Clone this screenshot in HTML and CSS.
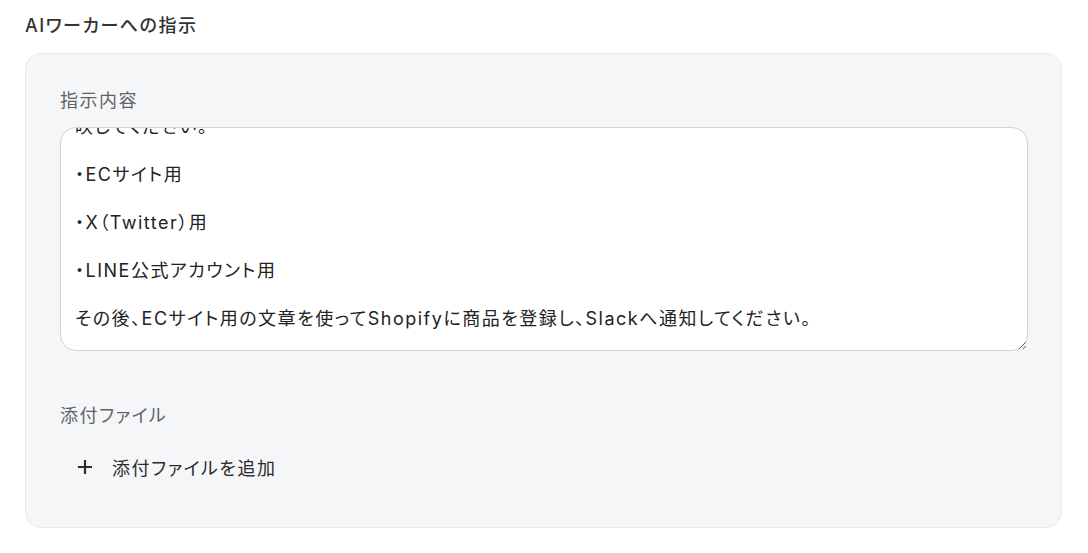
FILE: index.html
```html
<!DOCTYPE html>
<html lang="ja">
<head>
<meta charset="utf-8">
<title>AIワーカーへの指示</title>
<link rel="stylesheet" href="styles.css">
</head>
<body>
<div class="page">
  <h2 class="title">AIワーカーへの指示</h2>
  <section class="card">
    <div class="label">指示内容</div>
    <div class="editor">
      <div class="editor-text">商品情報をもとに、以下の3種類の紹介文を作成し、それぞれの媒体の特徴を反
映してください。

・ECサイト用

・X（Twitter）用

・LINE公式アカウント用

その後、ECサイト用の文章を使ってShopifyに商品を登録し、Slackへ通知してください。</div>
    </div>
    <div class="label label-files">添付ファイル</div>
    <button class="add-file" type="button">
      <svg class="plus" width="18" height="18" viewBox="0 0 18 18" aria-hidden="true">
        <path d="M9 2v14M2 9h14" stroke="#2b2b2b" stroke-width="2.2" fill="none"/>
      </svg>
      <span>添付ファイルを追加</span>
    </button>
  </section>
</div>
</body>
</html>
```

FILE: styles.css
```css
* { box-sizing: border-box; }

html, body {
  margin: 0;
  padding: 0;
  background: #ffffff;
}

body {
  font-family: Inter, "Noto Sans CJK JP", sans-serif;
  font-feature-settings: "palt";
  letter-spacing: 1.5px;
  color: #222;
}

.page {
  padding: 12px 26px 0 25px;
}

.title {
  margin: 0 0 13px;
  font-size: 18px;
  line-height: 28px;
  font-weight: 500;
  color: #333;
}

.card {
  background: #f5f6f8;
  border: 1px solid #e6e8eb;
  border-radius: 16px;
  padding: 34px 33px 40px 34px;
}

.label {
  font-size: 18px;
  line-height: 26px;
  color: #5f6368;
  margin-bottom: 13px;
}

.editor {
  height: 224px;
  background: #fff;
  border: 1px solid #cfd4db;
  border-radius: 16px;
  padding: 0 14px 19px 14px;
  overflow: hidden;
  resize: vertical;
  display: flex;
  flex-direction: column;
  justify-content: flex-end;
}

.editor-text {
  white-space: pre-wrap;
  font-size: 18px;
  line-height: 24px;
  color: #222;
}

.label-files {
  margin-top: 52px;
  margin-bottom: 18px;
}

.add-file {
  display: flex;
  align-items: center;
  gap: 18px;
  height: 40px;
  padding: 0 0 0 16px;
  border: none;
  background: transparent;
  font: inherit;
  font-size: 18px;
  letter-spacing: 1.5px;
  color: #2b2b2b;
  cursor: pointer;
}

.plus {
  display: block;
}
```
